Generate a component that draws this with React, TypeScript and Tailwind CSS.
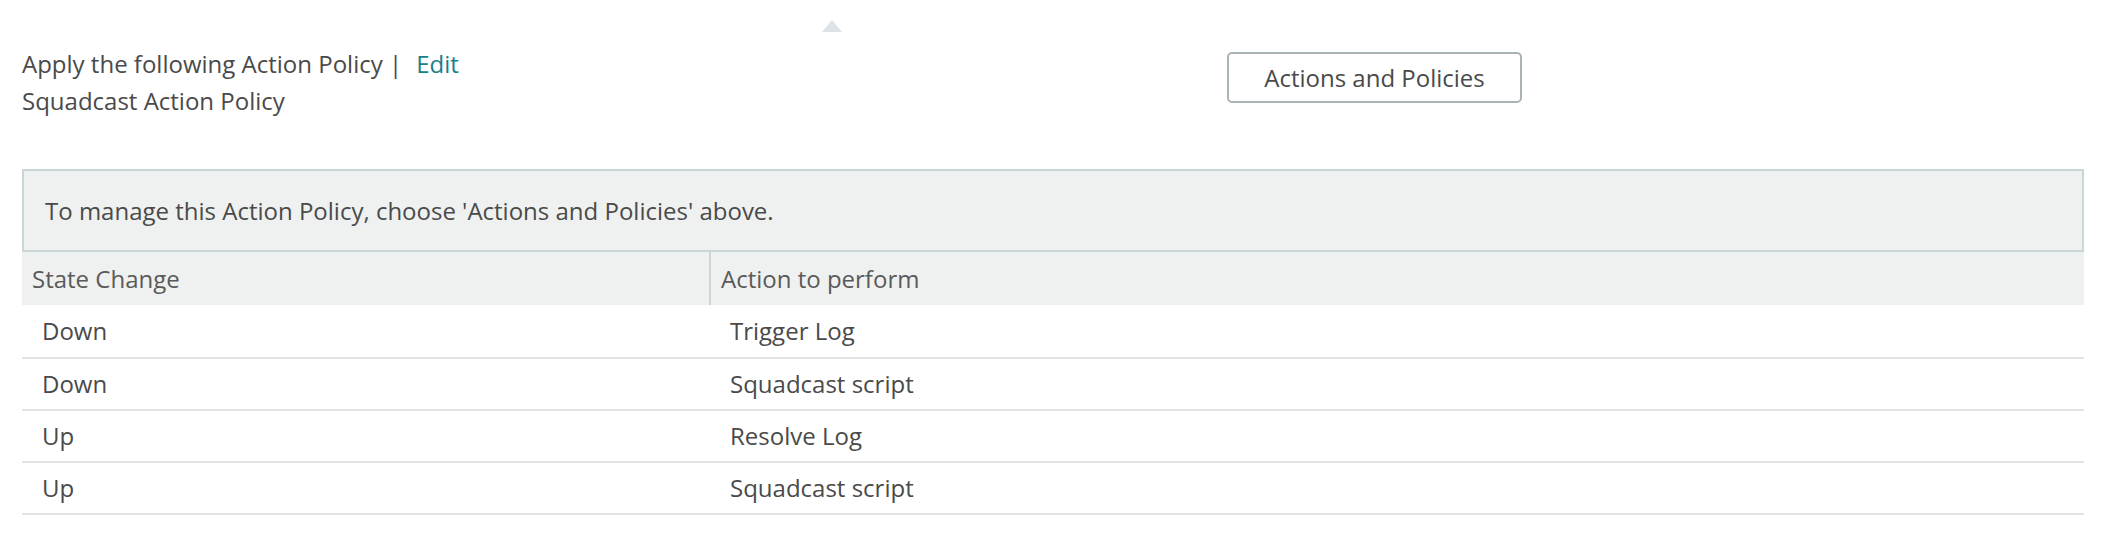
import React from 'react';

type Row = { state: string; action: string };

const rows: Row[] = [
  { state: 'Down', action: 'Trigger Log' },
  { state: 'Down', action: 'Squadcast script' },
  { state: 'Up', action: 'Resolve Log' },
  { state: 'Up', action: 'Squadcast script' },
];

export default function App() {
  return (
    <div className="min-h-[538px] w-full bg-white text-[#4a4a4a] font-['Open_Sans',sans-serif]">
      {/* pointer caret */}
      <div className="h-[52px] pl-[822px] pt-[20px]">
        <div className="h-0 w-0 border-x-[10px] border-b-[12px] border-x-transparent border-b-[#dde3e4]" />
      </div>

      <div className="pl-[22px] pr-[20px]">
        <div className="flex items-start">
          <div className="w-[1205px] text-[24px] leading-[37px] -mt-[7px]">
            <div>
              Apply the following Action Policy |
              <a href="#" className="ml-[14px] text-[#18808a]">
                Edit
              </a>
            </div>
            <div>Squadcast Action Policy</div>
          </div>
          <button className="h-[51px] w-[295px] rounded-[5px] border-2 border-[#aab4b6] bg-white text-[24px] text-[#4a4a4a]">
            Actions and Policies
          </button>
        </div>

        <div className="mt-[50px]">
          <div className="flex h-[83px] items-center border-2 border-[#cad5d7] bg-[#eff1f0] px-[21px] text-[24px]">
            To manage this Action Policy, choose 'Actions and Policies' above.
          </div>
          <div className="grid h-[53px] grid-cols-[687px_1fr] bg-[#eff1f0] text-[24px] text-[#5a5a5a]">
            <div className="flex items-center pl-[10px]">State Change</div>
            <div className="flex items-center border-l-2 border-[#cad5d7] pl-[10px]">Action to perform</div>
          </div>
          {rows.map((r, i) => (
            <div
              key={i}
              className={`grid grid-cols-[687px_1fr] border-b-2 border-[#e0e5e4] text-[24px] ${i === 0 ? 'h-[54px]' : 'h-[52px]'}`}
            >
              <div className="flex items-center pl-[20px]">{r.state}</div>
              <div className="flex items-center pl-[21px]">{r.action}</div>
            </div>
          ))}
        </div>
      </div>
    </div>
  );
}
